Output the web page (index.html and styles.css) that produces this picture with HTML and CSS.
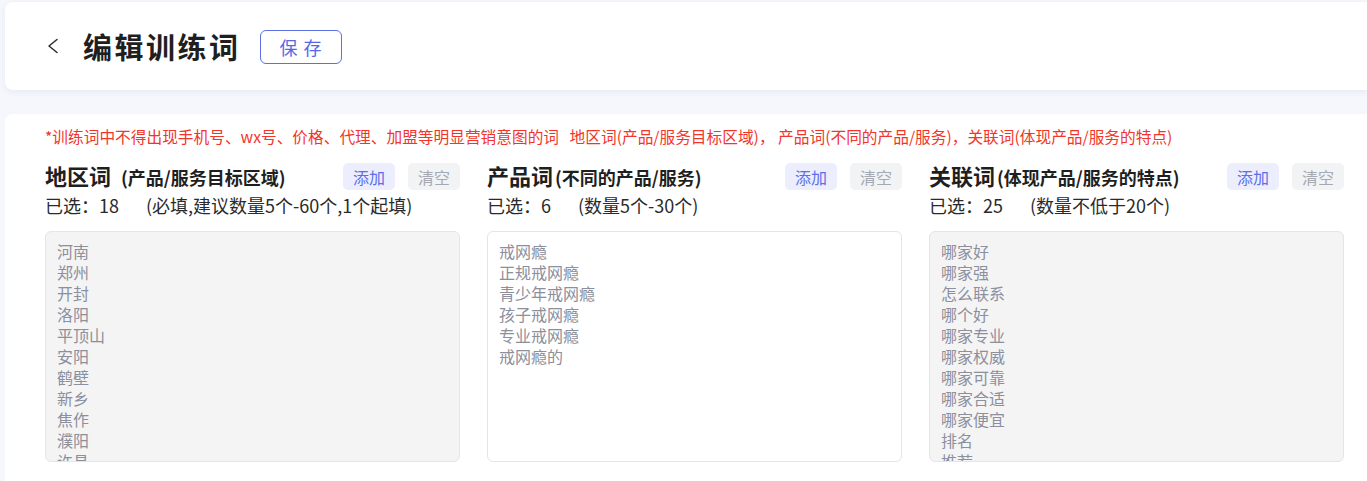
FILE: index.html
```html
<!DOCTYPE html>
<html lang="zh">
<head>
<meta charset="utf-8">
<title>编辑训练词</title>
<link rel="stylesheet" href="styles.css">
</head>
<body>
<header class="topbar">
  <span class="back" aria-label="返回">
    <svg width="12" height="16" viewBox="0 0 12 16"><path d="M10 1.5 L2 8 L10 14.5" fill="none" stroke="#2b2b2b" stroke-width="1.5" stroke-linecap="round" stroke-linejoin="round"/></svg>
  </span>
  <h1 class="title">编辑训练词</h1>
  <button class="save">保 存</button>
</header>

<main class="panel">
  <p class="notice">*训练词中不得出现手机号、wx号、价格、代理、加盟等明显营销意图的词&nbsp;&nbsp;&nbsp;地区词(产品/服务目标区域)，&nbsp;产品词(不同的产品/服务)，关联词(体现产品/服务的特点)</p>
  <div class="cols">
    <section class="col">
      <div class="col-head">
        <h2 class="col-title">地区词 <span class="col-desc">(产品/服务目标区域)</span></h2>
        <div class="btns"><button class="btn add">添加</button><button class="btn clear">清空</button></div>
      </div>
      <div class="count">已选：<span class="num">18</span><span class="hint">(必填,建议数量5个-60个,1个起填)</span></div>
      <div class="words disabled">
        <div>河南</div><div>郑州</div><div>开封</div><div>洛阳</div><div>平顶山</div><div>安阳</div><div>鹤壁</div><div>新乡</div><div>焦作</div><div>濮阳</div><div>许昌</div>
      </div>
    </section>
    <section class="col">
      <div class="col-head">
        <h2 class="col-title">产品词<span class="col-desc">(不同的产品/服务)</span></h2>
        <div class="btns"><button class="btn add">添加</button><button class="btn clear">清空</button></div>
      </div>
      <div class="count">已选：<span class="num">6</span><span class="hint">(数量5个-30个)</span></div>
      <div class="words">
        <div>戒网瘾</div><div>正规戒网瘾</div><div>青少年戒网瘾</div><div>孩子戒网瘾</div><div>专业戒网瘾</div><div>戒网瘾的</div>
      </div>
    </section>
    <section class="col">
      <div class="col-head">
        <h2 class="col-title">关联词<span class="col-desc">(体现产品/服务的特点)</span></h2>
        <div class="btns"><button class="btn add">添加</button><button class="btn clear">清空</button></div>
      </div>
      <div class="count">已选：<span class="num">25</span><span class="hint">(数量不低于20个)</span></div>
      <div class="words disabled">
        <div>哪家好</div><div>哪家强</div><div>怎么联系</div><div>哪个好</div><div>哪家专业</div><div>哪家权威</div><div>哪家可靠</div><div>哪家合适</div><div>哪家便宜</div><div>排名</div><div>推荐</div>
      </div>
    </section>
  </div>
</main>
</body>
</html>
```
FILE: styles.css
```css
* { box-sizing: border-box; }
html, body { margin: 0; height: 100%; }
body {
  background: #f5f7fd;
  font-family: "Noto Sans CJK SC", "Noto Sans", sans-serif;
  padding: 2px 0 0 5px;
  overflow: hidden;
  color: #222;
}
.topbar {
  background: #fff;
  height: 88px;
  border-radius: 8px 0 0 8px;
  box-shadow: 0 2px 6px rgba(40, 50, 90, 0.07);
  display: flex;
  align-items: center;
  padding-left: 42px;
}
.back { display: flex; width: 12px; height: 16px; align-items: center; }
.title {
  margin: 0 0 0 24px;
  font-size: 29px;
  font-weight: 700;
  letter-spacing: 2.5px;
  color: #1f1f1f;
  line-height: 1;
}
.save {
  margin-left: 19px;
  width: 82px;
  height: 34px;
  border: 1px solid #5d6fe4;
  border-radius: 6px;
  background: #fff;
  color: #5468e6;
  font-family: inherit;
  font-size: 18px;
  letter-spacing: 1px;
  text-indent: 1px;
  padding: 0;
  margin-top: 2px;
}
.panel {
  margin-top: 24px;
  background: #fff;
  border-radius: 8px 0 0 0;
  padding: 13px 0 40px 40px;
  height: 400px;
}
.notice {
  margin: 0;
  color: #f2352b;
  font-size: 15.7px;
  line-height: 20px;
  white-space: nowrap;
}
.cols {
  display: grid;
  grid-template-columns: 415px 415px 415px;
  column-gap: 27px;
  margin-top: 16px;
}
.col-head {
  display: flex;
  justify-content: space-between;
  align-items: center;
  height: 27px;
}
.col-title {
  margin: 0;
  font-size: 22px;
  font-weight: 700;
  color: #1f1f1f;
  line-height: 27px;
  white-space: nowrap;
}
.col-desc {
  font-size: 18px;
  font-weight: 600;
  margin-left: 2px;
}
.col:first-child .col-desc { margin-left: 5px; }
.btns { display: flex; gap: 13px; }
.btn {
  width: 52px;
  height: 27px;
  border: none;
  border-radius: 5px;
  font-family: inherit;
  font-size: 16px;
  padding: 0;
}
.add { background: #eceefd; color: #5d6fe8; }
.clear { background: #f2f3f5; color: #a6a9b2; }
.count {
  margin-top: 4px;
  font-size: 18px;
  line-height: 22px;
  color: #2a2a2a;
  white-space: nowrap;
}
.hint { margin-left: 27px; }
.words {
  margin-top: 15px;
  height: 231px;
  border: 1px solid #e4e4ee;
  border-radius: 6px;
  background: #fff;
  padding: 9px 11px 0;
  overflow: hidden;
  font-size: 16px;
  line-height: 21px;
  color: #8c8f9c;
}
.words.disabled { background: #f4f4f5; }
```
